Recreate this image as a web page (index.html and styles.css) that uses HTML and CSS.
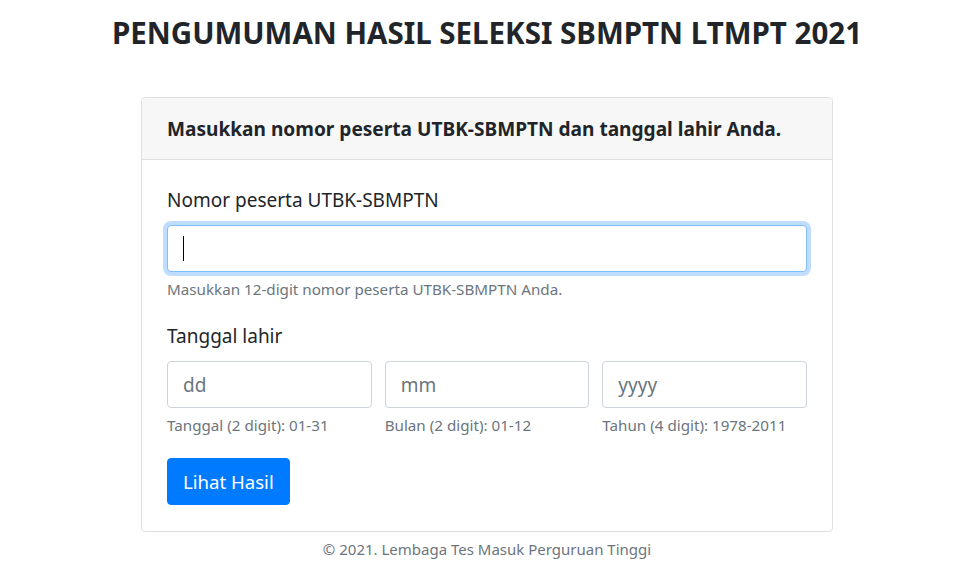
FILE: index.html
```html
<!DOCTYPE html>
<html lang="id">
<head>
<meta charset="utf-8">
<title>Pengumuman Hasil Seleksi SBMPTN LTMPT 2021</title>
<link rel="stylesheet" href="styles.css">
</head>
<body>
<div class="page">
  <h1 class="title">PENGUMUMAN HASIL SELEKSI SBMPTN LTMPT 2021</h1>
  <div class="card">
    <div class="card-header">Masukkan nomor peserta UTBK-SBMPTN dan tanggal lahir Anda.</div>
    <form class="card-body">
      <div class="form-group">
        <label class="label">Nomor peserta UTBK-SBMPTN</label>
        <div class="input-wrap">
          <input class="form-control focused" type="text">
          <span class="caret"></span>
        </div>
        <small class="help">Masukkan 12-digit nomor peserta UTBK-SBMPTN Anda.</small>
      </div>
      <div class="form-group date-group">
        <label class="label">Tanggal lahir</label>
        <div class="date-row">
          <div class="date-col">
            <input class="form-control" type="text" placeholder="dd">
            <small class="help">Tanggal (2 digit): 01-31</small>
          </div>
          <div class="date-col">
            <input class="form-control" type="text" placeholder="mm">
            <small class="help">Bulan (2 digit): 01-12</small>
          </div>
          <div class="date-col">
            <input class="form-control" type="text" placeholder="yyyy">
            <small class="help">Tahun (4 digit): 1978-2011</small>
          </div>
        </div>
      </div>
      <button class="btn" type="button">Lihat Hasil</button>
    </form>
  </div>
  <p class="footer">© 2021. Lembaga Tes Masuk Perguruan Tinggi</p>
</div>
</body>
</html>
```
FILE: styles.css
```css
html, body {
  margin: 0;
  padding: 0;
  background: #fff;
}
body {
  font-family: "Noto Sans", "Open Sans", "Liberation Sans", sans-serif;
  color: #212529;
  font-size: 20px;
  line-height: 1.5;
}
.page {
  padding: 0 5px 0 0;
  display: flex;
  flex-direction: column;
  align-items: center;
}
.title {
  margin: 12px 0 0;
  font-size: 29.5px;
  font-weight: 700;
  line-height: 42px;
  text-align: center;
}
.card {
  margin-top: 43px;
  width: 692px;
  box-sizing: border-box;
  border: 1px solid #dfdfdf;
  border-radius: 4px;
  background: #fff;
}
.card-header {
  background: #f7f7f7;
  border-bottom: 1px solid #dfdfdf;
  padding: 16px 25px 15px;
  font-weight: 700;
  font-size: 19.1px;
  line-height: 30px;
  border-radius: 3px 3px 0 0;
}
.card-body {
  padding: 25px 25px 26px;
  margin: 0;
}
.form-group {
  margin-bottom: 20px;
}
.date-group {
  margin-bottom: 21px;
}
.label {
  display: block;
  margin-bottom: 10px;
  font-size: 19px;
  line-height: 30px;
}
.input-wrap {
  position: relative;
}
.form-control {
  display: block;
  width: 100%;
  box-sizing: border-box;
  height: 47px;
  padding: 7px 15px;
  font-family: inherit;
  font-size: 19px;
  line-height: 30px;
  color: #495057;
  background: #fff;
  border: 1px solid #ced4da;
  border-radius: 4px;
  outline: none;
}
.form-control::placeholder {
  color: #6c757d;
  opacity: 1;
}
.focused {
  border-color: #80bdff;
  box-shadow: 0 0 0 4px rgba(0, 123, 255, 0.25);
}
.caret {
  position: absolute;
  left: 16px;
  top: 11px;
  width: 1px;
  height: 25px;
  background: #000;
}
.help {
  display: block;
  margin-top: 5px;
  font-size: 15.2px;
  line-height: 24px;
  color: #6c757d;
}
.date-row {
  display: grid;
  grid-template-columns: 1fr 1fr 1fr;
  column-gap: 13px;
}
.btn {
  display: block;
  height: 47px;
  padding: 7px 15px;
  font-family: inherit;
  font-size: 18.6px;
  line-height: 30px;
  color: #fff;
  background: #007bff;
  border: 1px solid #007bff;
  border-radius: 4px;
}
.footer {
  margin: 6px 0 0;
  font-size: 15px;
  line-height: 22px;
  color: #6c757d;
  text-align: center;
}
```
